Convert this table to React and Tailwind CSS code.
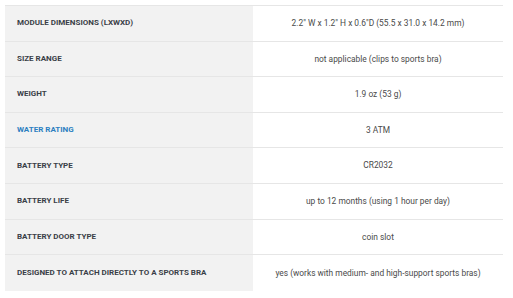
import React from 'react'

const specs = [
  ['Module Dimensions (LxWxD)', '2.2" W x 1.2" H x 0.6"D (55.5 x 31.0 x 14.2 mm)'],
  ['Size Range', 'not applicable (clips to sports bra)'],
  ['Weight', '1.9 oz (53 g)'],
  ['Water Rating', '3 ATM', true],
  ['Battery Type', 'CR2032'],
  ['Battery Life', 'up to 12 months (using 1 hour per day)'],
  ['Battery Door Type', 'coin slot'],
  ['Designed to Attach Directly to a Sports Bra', 'yes (works with medium- and high-support sports bras)'],
]

export default function App() {
  return (
    <div className="min-h-screen bg-white px-[5px] pt-[5px] font-['Roboto',sans-serif]">
      <div className="w-[498px] border-t border-[#e6e6e6]">
        {specs.map(([label, value, link]) => (
          <div key={label} className="grid h-[35.6px] grid-cols-[248px_1fr] border-b border-[#e6e6e6] last:border-b-0">
            <div className="flex items-center bg-[#f2f2f2] pl-[12px] text-[8px] font-bold uppercase text-[#3a3f47]">
              <span className={link ? 'text-[#2d7fc1]' : ''}>{label}</span>
            </div>
            <div className="flex items-center justify-center text-[8.4px] text-[#4a4a4a]">{value}</div>
          </div>
        ))}
      </div>
    </div>
  )
}
